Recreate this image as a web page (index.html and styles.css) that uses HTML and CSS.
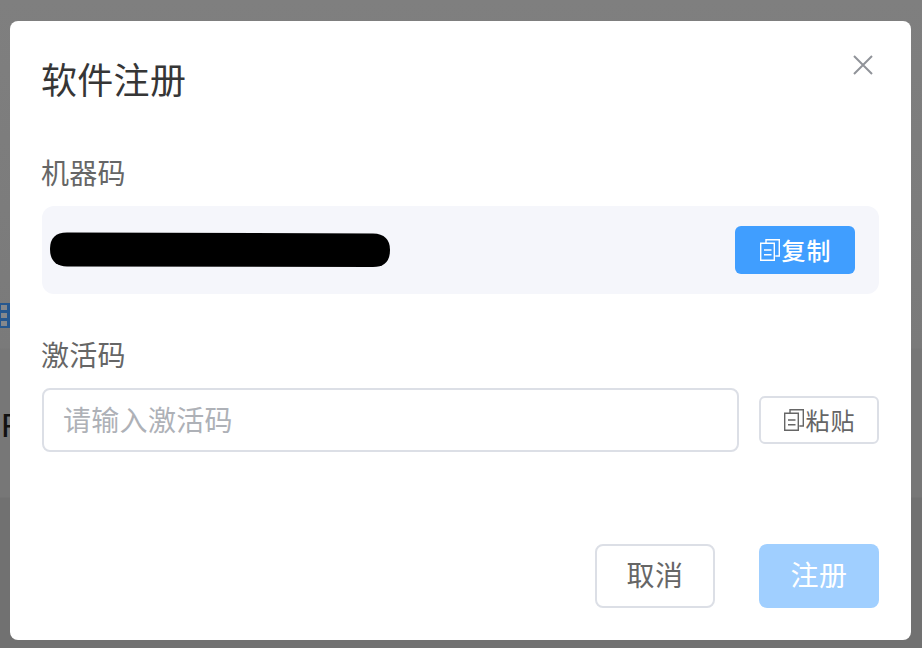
FILE: index.html
```html
<!DOCTYPE html>
<html lang="zh-CN">
<head>
  <meta charset="UTF-8">
  <meta name="viewport" content="width=device-width, initial-scale=1.0">
  <title>软件注册</title>
  <link rel="stylesheet" href="styles.css">
</head>
<body>
  <!-- Page behind the mask, only a sliver shows -->
  <div class="behind-icon"><span></span><span></span><span></span></div>
  <div class="behind-text">F</div>

  <div class="dialog">
    <div class="dialog-header">
      <h2>软件注册</h2>
      <svg class="close" width="20" height="20" viewBox="0 0 20 20">
        <path d="M1 1L19 19M19 1L1 19" fill="none" stroke="#909399" stroke-width="2"/>
      </svg>
    </div>

    <div class="label label-first">机器码</div>
    <div class="code-box">
      <svg class="code-mask" width="340" height="36" viewBox="0 0 340 36">
        <path d="M17 0.5L323 1.5Q340 2 340 18Q340 35 323 35L17 34.5Q0 34 0 17Q0 0.5 17 0.5Z" fill="#000"/>
      </svg>
      <button class="btn btn-copy">
        <svg class="doc-icon" width="20" height="22" viewBox="0 0 20 22">
          <path d="M6 4V0.7H19.3V17H15.3M0.7 4.3H14.3V21.3H0.7ZM4 11H11.5M4 15.7H11.5" fill="none" stroke="currentColor" stroke-width="1.4"/>
        </svg><span class="btn-text">复制</span>
      </button>
    </div>

    <div class="label label-second">激活码</div>
    <div class="input-row">
      <input class="code-input" type="text" placeholder="请输入激活码">
      <button class="btn btn-paste">
        <svg class="doc-icon" width="20" height="22" viewBox="0 0 20 22">
          <path d="M6 4V0.7H19.3V17H15.3M0.7 4.3H14.3V21.3H0.7ZM4 11H11.5M4 15.7H11.5" fill="none" stroke="currentColor" stroke-width="1.4"/>
        </svg><span class="btn-text">粘贴</span>
      </button>
    </div>

    <div class="dialog-footer">
      <button class="btn btn-large btn-cancel"><span class="btn-text">取消</span></button>
      <button class="btn btn-large btn-submit"><span class="btn-text">注册</span></button>
    </div>
  </div>
</body>
</html>
```

FILE: styles.css
```css
/* General Styles */
* {
  margin: 0;
  padding: 0;
  box-sizing: border-box;
}

body {
  position: relative;
  height: 648px;
  overflow: hidden;
  padding: 21px 11px 8px 10px;
  font-family: "Noto Sans CJK SC", "Liberation Sans", sans-serif;
  background: linear-gradient(#7f7f7f 0, #7a7a7a 348px, #777 349px, #777 497px, #717171 498px, #717171 100%);
}

/* Background fragments */
.behind-icon {
  position: absolute;
  left: 0;
  top: 303px;
  display: flex;
  flex-direction: column;
  gap: 3px;
  width: 10px;
  height: 25px;
  padding: 2px 0 0 1px;
  background-color: #27588f;
}

.behind-icon span {
  width: 6px;
  height: 5px;
  background-color: #85888c;
}

.behind-text {
  position: absolute;
  left: 1px;
  top: 405px;
  font-family: "Liberation Sans", sans-serif;
  font-size: 34px;
  line-height: 40px;
  color: #111;
}

/* Dialog */
.dialog {
  position: relative;
  height: 619px;
  padding: 35px 32px 32px;
  background-color: white;
  border-radius: 8px;
}

.dialog-header {
  display: flex;
  justify-content: space-between;
}

.dialog-header h2 {
  margin-left: -1px;
  font-size: 36px;
  font-weight: 400;
  line-height: 44px;
  letter-spacing: 0.3px;
  color: #363636;
}

.close {
  position: absolute;
  top: 34px;
  right: 38px;
}

.label {
  margin-left: -1px;
  font-size: 28px;
  line-height: 40px;
  letter-spacing: 0.3px;
  color: #666;
}

.label-first {
  margin-top: 52px;
}

.label-second {
  margin-top: 40px;
}

/* Machine code */
.code-box {
  display: flex;
  justify-content: space-between;
  align-items: center;
  height: 88px;
  margin-top: 14px;
  padding: 0 24px 0 8px;
  background-color: #f5f6fb;
  border-radius: 12px;
}

.code-mask {
  margin-bottom: 1px;
}

/* Buttons */
.btn {
  display: flex;
  justify-content: center;
  align-items: center;
  width: 120px;
  height: 48px;
  padding-left: 1px;
  font-family: inherit;
  font-size: 24px;
  border-radius: 6px;
  border: 2px solid transparent;
  cursor: pointer;
}

.btn-text {
  position: relative;
  top: -1px;
  letter-spacing: 1px;
}

.doc-icon {
  margin-right: 2px;
}

.btn-copy {
  background-color: #409eff;
  color: white;
  font-weight: 500;
}

.btn-paste {
  background-color: white;
  border-color: #dcdfe6;
  color: #666;
}

.btn-large {
  height: 64px;
  padding-left: 0;
  font-size: 28px;
  border-radius: 8px;
}

.btn-large .btn-text {
  top: -2px;
  letter-spacing: 0.5px;
}

.btn-cancel {
  background-color: white;
  border-color: #dcdfe6;
  color: #666;
}

.btn-submit {
  background-color: #a0cfff;
  color: white;
}

/* Activation code */
.input-row {
  display: flex;
  justify-content: space-between;
  align-items: center;
  margin-top: 14px;
}

.code-input {
  width: 697px;
  height: 64px;
  padding: 0 19px 3px;
  font-family: inherit;
  font-size: 28px;
  letter-spacing: 0.3px;
  color: #666;
  border: 2px solid #dcdfe6;
  border-radius: 8px;
  outline: none;
}

.code-input::placeholder {
  color: #aeb1b7;
}

/* Footer */
.dialog-footer {
  display: flex;
  justify-content: flex-end;
  gap: 44px;
  margin-top: 92px;
}
```
